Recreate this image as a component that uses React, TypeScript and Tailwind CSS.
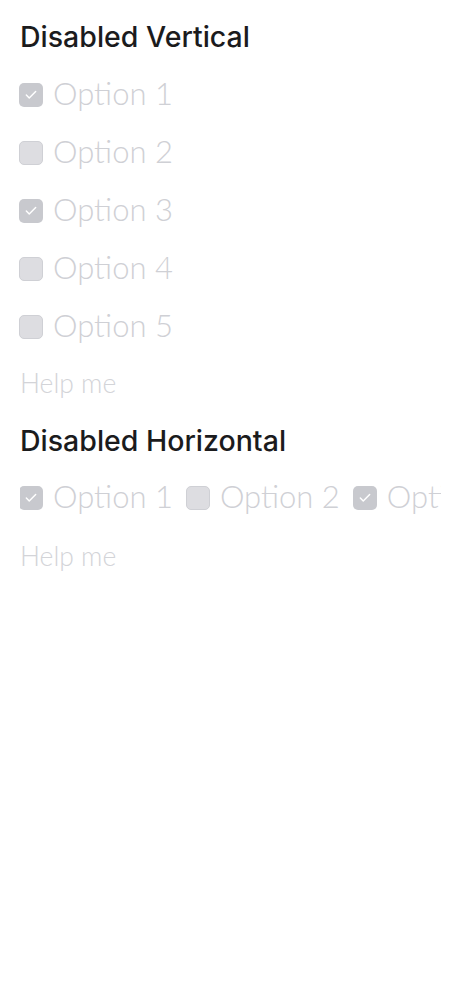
import { Check } from 'lucide-react';

type Option = { label: string; checked: boolean };

const vertical: Option[] = [
  { label: 'Option 1', checked: true },
  { label: 'Option 2', checked: false },
  { label: 'Option 3', checked: true },
  { label: 'Option 4', checked: false },
  { label: 'Option 5', checked: false },
];

const horizontal: Option[] = [
  { label: 'Option 1', checked: true },
  { label: 'Option 2', checked: false },
  { label: 'Option 3', checked: true },
];

function Box({ checked }: { checked: boolean }) {
  return (
    <span
      className={
        checked
          ? 'flex h-6 w-6 shrink-0 items-center justify-center rounded-[5px] bg-[#c8c9ce]'
          : 'flex h-6 w-6 shrink-0 items-center justify-center rounded-[5px] border border-[#cfd0d5] bg-[#dddde1]'
      }
    >
      {checked && <Check className="h-3.5 w-3.5 text-white" strokeWidth={2.5} />}
    </span>
  );
}

function Item({ option }: { option: Option }) {
  return (
    <label className="-ml-px flex h-[58px] shrink-0 items-center gap-[10px]">
      <Box checked={option.checked} />
      <span className="mb-1 text-[31px] font-light leading-none text-[#cfd0d5]">
        {option.label}
      </span>
    </label>
  );
}

export default function App() {
  return (
    <div className="min-h-screen bg-white px-5 pt-[19px] font-['Lato',sans-serif]">
      <h2 className="h-9 text-[28.5px] font-medium leading-9 text-[#1b1b1d] font-['Inter',sans-serif]">
        Disabled Vertical
      </h2>
      <div className="mt-[11px] flex flex-col">
        {vertical.map((option) => (
          <Item key={option.label} option={option} />
        ))}
      </div>
      <p className="mt-3 h-[30px] text-[26.5px] font-light leading-[30px] text-[#d3d4d8]">
        Help me
      </p>

      <h2 className="mt-[25px] h-9 text-[28.5px] font-medium leading-9 text-[#1b1b1d] font-['Inter',sans-serif]">
        Disabled Horizontal
      </h2>
      <div className="mt-[10px] flex gap-[14px] overflow-hidden whitespace-nowrap">
        {horizontal.map((option) => (
          <Item key={option.label} option={option} />
        ))}
      </div>
      <p className="mt-[14px] h-[30px] text-[26.5px] font-light leading-[30px] text-[#d3d4d8]">
        Help me
      </p>
    </div>
  );
}
